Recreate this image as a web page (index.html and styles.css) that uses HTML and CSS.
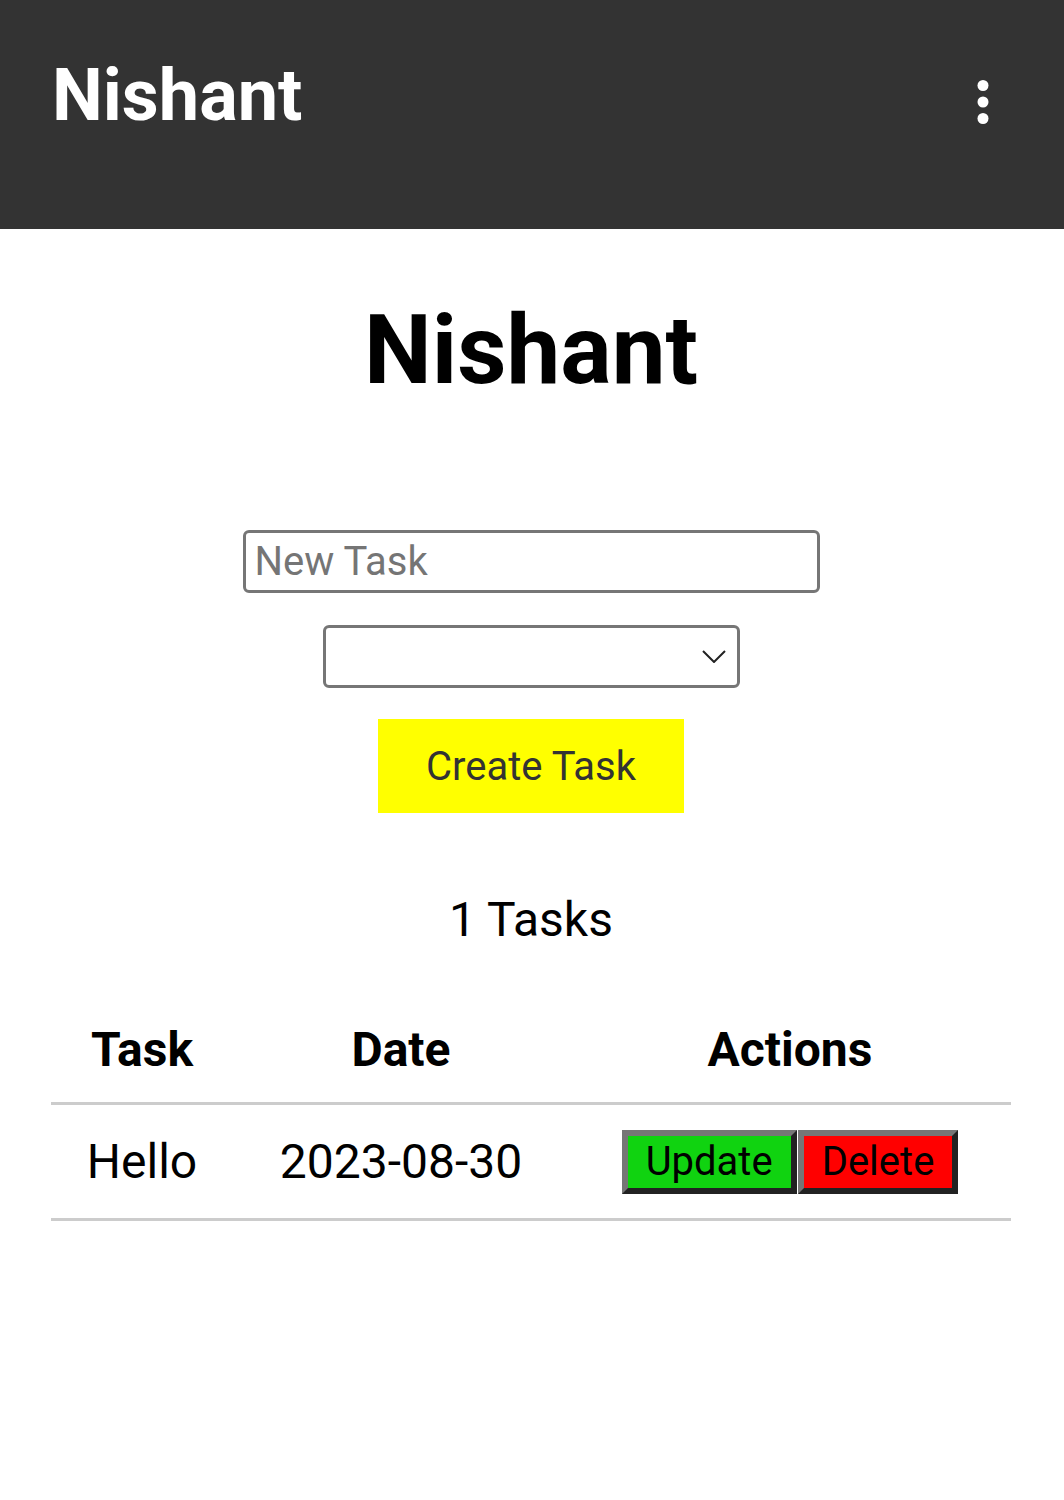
FILE: index.html
```html
<!DOCTYPE html>
<html lang="en">
<head>
<meta charset="utf-8">
<title>Nishant</title>
<link rel="stylesheet" href="styles.css">
</head>
<body>
<header class="topbar">
  <div class="brand">Nishant</div>
  <svg class="menu" viewBox="0 0 24 24" width="66" height="66" aria-hidden="true">
    <circle cx="12" cy="6" r="2" fill="#fff"/>
    <circle cx="12" cy="12" r="2" fill="#fff"/>
    <circle cx="12" cy="18" r="2" fill="#fff"/>
  </svg>
</header>
<main class="content">
  <h1 class="title">Nishant</h1>
  <input class="task-input" type="text" placeholder="New Task">
  <div class="select-wrap">
    <select class="task-select"><option></option></select>
    <svg class="chevron" viewBox="0 0 24 13" width="24" height="13" aria-hidden="true">
      <path d="M1 1 L12 12 L23 1" fill="none" stroke="#222" stroke-width="2"/>
    </svg>
  </div>
  <button class="create-btn" type="button">Create Task</button>
  <p class="count">1 Tasks</p>
  <table class="tasks">
    <colgroup>
      <col class="c-task"><col class="c-date"><col class="c-actions">
    </colgroup>
    <thead>
      <tr><th>Task</th><th>Date</th><th>Actions</th></tr>
    </thead>
    <tbody>
      <tr>
        <td>Hello</td>
        <td>2023-08-30</td>
        <td>
          <div class="actions">
            <button class="btn btn-update" type="button">Update</button>
            <button class="btn btn-delete" type="button">Delete</button>
          </div>
        </td>
      </tr>
    </tbody>
  </table>
</main>
</body>
</html>
```
FILE: styles.css
```css
* { box-sizing: border-box; }

body {
  margin: 0;
  background: #fff;
  font-family: Roboto, "Noto Sans", Arial, sans-serif;
  color: #000;
}

.topbar {
  height: 229px;
  background: #333;
  display: flex;
  justify-content: space-between;
  align-items: flex-start;
  padding: 60px 48px 0 52px;
}

.brand {
  color: #fff;
  font-weight: 700;
  font-size: 72px;
  line-height: 1;
}

.menu {
  display: block;
  margin-top: 9px;
}

.content {
  display: flex;
  flex-direction: column;
  align-items: center;
  padding-right: 2px;
}

.title {
  margin: 73px 0 0;
  font-size: 96px;
  font-weight: 700;
  line-height: 1;
}

.task-input {
  margin-top: 132px;
  width: 577px;
  height: 63px;
  border: 3px solid #767676;
  border-radius: 6px;
  padding: 0 9px;
  font-family: inherit;
  font-size: 40px;
  color: #000;
  outline: none;
}

.task-input::placeholder { color: #757575; }

.select-wrap {
  position: relative;
  margin-top: 32px;
}

.task-select {
  display: block;
  width: 417px;
  height: 63px;
  border: 3px solid #767676;
  border-radius: 6px;
  background: #fff;
  appearance: none;
  -webkit-appearance: none;
  font-family: inherit;
  font-size: 40px;
}

.chevron {
  position: absolute;
  right: 14px;
  top: 25px;
  pointer-events: none;
}

.create-btn {
  margin-top: 31px;
  width: 306px;
  height: 94px;
  border: none;
  background: #ffff00;
  color: #333;
  font-family: inherit;
  font-size: 40px;
  padding: 0;
}

.count {
  margin: 83px 0 0;
  font-size: 48px;
  line-height: 1;
}

.tasks {
  margin-top: 56px;
  width: 960px;
  border-collapse: collapse;
  table-layout: fixed;
}

.c-task { width: 182px; }
.c-date { width: 336px; }
.c-actions { width: 442px; }

.tasks th,
.tasks td {
  font-size: 48px;
  line-height: 1;
  text-align: center;
  padding: 0;
}

.tasks th {
  font-weight: 700;
  padding: 26px 0 28px;
  border-bottom: 3px solid #ccc;
}

.tasks td {
  height: 116px;
  vertical-align: middle;
  border-bottom: 3px solid #ccc;
}

.actions {
  display: flex;
  justify-content: center;
  gap: 1px;
}

.btn {
  height: 64px;
  padding: 0 18px;
  border-width: 6px;
  border-style: solid;
  border-color: #767676 #222 #222 #767676;
  font-family: inherit;
  font-size: 40px;
  line-height: 1;
  color: #000;
}

.btn-update { background: #10d310; }
.btn-delete { background: #ff0000; }
```
